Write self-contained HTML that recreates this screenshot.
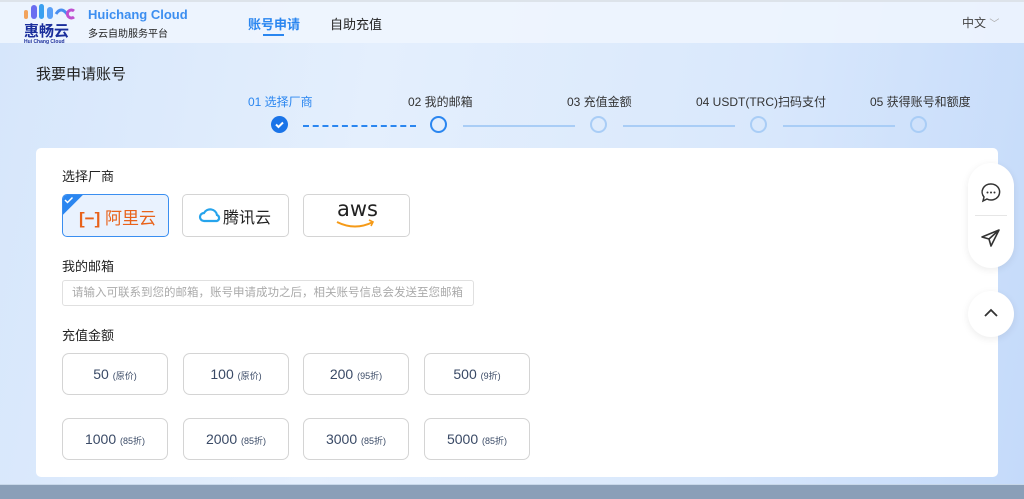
<!DOCTYPE html>
<html><head><meta charset="utf-8"><style>
*{margin:0;padding:0;box-sizing:border-box}
body{width:1024px;height:499px;overflow:hidden;position:relative;font-family:"Liberation Sans","Noto Sans CJK SC",sans-serif;background:linear-gradient(100deg,#d6e6fb 0%,#e4effd 35%,#d9e8fc 70%,#c4dafa 100%);color:#222}
.hdr{position:absolute;left:0;top:0;width:1024px;height:43px;background:rgba(240,246,254,.85);border-top:2px solid #dde3ea}
.abs{position:absolute}
.card{position:absolute;left:36px;top:148px;width:962px;height:329px;background:#fff;border-radius:5px}
.lbl{position:absolute;font-size:13px;color:#222}
.btn{position:absolute;width:106px;height:42px;border:1.5px solid #d4d4d4;border-radius:7px;background:#fff;text-align:center;line-height:40px;font-size:14px;color:#3a4a66}
.btn small{font-size:9px}
.step{position:absolute;top:93px;font-size:12px;color:#333}
.circ{position:absolute;top:116px;width:17px;height:17px;border:2px solid #a9cdf6;border-radius:50%}
.ln{position:absolute;top:125px;height:2px;background:#a9cdf6}
</style></head><body>
<div class="hdr"></div>
<svg class="abs" style="left:22px;top:2px" width="62" height="42">
<rect x="2" y="8" width="4" height="9" rx="2" fill="#f2a35c"/>
<rect x="9" y="3" width="6" height="14" rx="3" fill="#6a6df0"/>
<rect x="17" y="2" width="5" height="15" rx="2.5" fill="#3aa0f0"/>
<rect x="25" y="5" width="6" height="12" rx="3" fill="#5aa0f8"/>
<path d="M34 12 q5 -8 11 0" stroke="#4a8ef0" stroke-width="3" fill="none"/>
<path d="M52 9 a4 4 0 1 0 0 6" stroke="#c050d0" stroke-width="3" fill="none"/>
<text x="2" y="34" font-size="15" font-weight="bold" fill="#1a2e9c" font-family="Noto Sans CJK SC">惠畅云</text>
<text x="2" y="41" font-size="5" font-weight="bold" fill="#1a2e9c">Hui Chang Cloud</text>
</svg>
<div class="abs" style="left:88px;top:7px;font-size:13px;font-weight:bold;color:#3c8ef0">Huichang Cloud</div>
<div class="abs" style="left:88px;top:25px;font-size:10px;color:#222">多云自助服务平台</div>
<div class="abs" style="left:248px;top:14px;font-size:13px;font-weight:bold;color:#2a86f0">账号申请</div>
<div class="abs" style="left:263px;top:34px;width:21px;height:2px;background:#2a86f0"></div>
<div class="abs" style="left:330px;top:14px;font-size:13px;color:#222">自助充值</div>
<div class="abs" style="left:962px;top:14px;font-size:12px;color:#444">中文 <span style="color:#aaa;font-size:10px">﹀</span></div>
<div class="abs" style="left:36px;top:63px;font-size:15px;color:#222">我要申请账号</div>
<div class="step" style="left:248px;color:#2a86f0">01 选择厂商</div>
<div class="step" style="left:408px">02 我的邮箱</div>
<div class="step" style="left:567px">03 充值金额</div>
<div class="step" style="left:696px">04 USDT(TRC)扫码支付</div>
<div class="step" style="left:870px">05 获得账号和额度</div>
<div class="abs" style="left:271px;top:116px;width:17px;height:17px;border-radius:50%;background:#1a74e8"></div>
<svg class="abs" style="left:271px;top:116px" width="17" height="17"><path d="M5 8.5l2.5 2.5 4.5-4.5" stroke="#fff" stroke-width="2" fill="none"/></svg>
<div class="abs" style="left:303px;top:125px;width:113px;border-top:2px dashed #2a86f0"></div>
<div class="circ" style="left:430px;border-color:#2a86f0"></div>
<div class="ln" style="left:463px;width:112px"></div>
<div class="circ" style="left:590px"></div>
<div class="ln" style="left:623px;width:112px"></div>
<div class="circ" style="left:750px"></div>
<div class="ln" style="left:783px;width:112px"></div>
<div class="circ" style="left:910px"></div>
<div class="card"></div>
<div class="lbl" style="left:62px;top:166px">选择厂商</div>
<div class="abs" style="left:62px;top:194px;width:107px;height:43px;border:1.5px solid #3a8ef0;border-radius:5px;background:#e9f2fe;overflow:hidden">
<div style="position:absolute;left:-14px;top:-14px;width:28px;height:28px;background:#2a86f0;transform:rotate(45deg)"></div>
<svg style="position:absolute;left:1px;top:1px" width="10" height="8"><path d="M1 4l2.5 2.5 5-5" stroke="#fff" stroke-width="1.5" fill="none"/></svg>
<div style="position:absolute;left:16px;top:9px;font-size:17px;color:#e8621a;font-weight:bold">[−]<span style="font-weight:normal"> 阿里云</span></div>
</div>
<div class="abs" style="left:182px;top:194px;width:107px;height:43px;border:1.5px solid #d4d4d4;border-radius:5px"></div>
<svg class="abs" style="left:198px;top:206px" width="24" height="18"><path d="M6 15a4 4 0 0 1 0-8a7 7 0 0 1 13 2a3.2 3.2 0 0 1 0 6z" fill="none" stroke="#27a4ec" stroke-width="2.2"/></svg>
<div class="abs" style="left:223px;top:204px;font-size:16px;color:#222">腾讯云</div>
<div class="abs" style="left:303px;top:194px;width:107px;height:43px;border:1.5px solid #d4d4d4;border-radius:5px"></div>
<div class="abs" style="left:337px;top:197px;font-size:21px;color:#222;font-family:'DejaVu Sans',sans-serif">aws</div>
<svg class="abs" style="left:335px;top:219px" width="42" height="11"><path d="M2 3q18 9 36 0" stroke="#f59a17" stroke-width="2" fill="none"/><path d="M34 1l4 2-2 4" stroke="#f59a17" stroke-width="1.6" fill="none"/></svg>
<div class="lbl" style="left:62px;top:256px">我的邮箱</div>
<div class="abs" style="left:62px;top:280px;width:412px;height:26px;border:1px solid #e0e0e0;border-radius:3px;font-size:11.5px;color:#aaa;line-height:24px;padding-left:9px;white-space:nowrap;overflow:hidden">请输入可联系到您的邮箱，账号申请成功之后，相关账号信息会发送至您邮箱</div>
<div class="lbl" style="left:62px;top:325px">充值金额</div>
<div class="btn" style="left:62px;top:353px">50 <small>(原价)</small></div>
<div class="btn" style="left:183px;top:353px">100 <small>(原价)</small></div>
<div class="btn" style="left:303px;top:353px">200 <small>(95折)</small></div>
<div class="btn" style="left:424px;top:353px">500 <small>(9折)</small></div>
<div class="btn" style="left:62px;top:418px">1000 <small>(85折)</small></div>
<div class="btn" style="left:183px;top:418px">2000 <small>(85折)</small></div>
<div class="btn" style="left:303px;top:418px">3000 <small>(85折)</small></div>
<div class="btn" style="left:424px;top:418px">5000 <small>(85折)</small></div>
<div class="abs" style="left:968px;top:163px;width:46px;height:105px;border-radius:23px;background:#fff;box-shadow:0 2px 8px rgba(0,0,0,.08)"></div>
<div class="abs" style="left:975px;top:215px;width:32px;height:1px;background:#e6e6e6"></div>
<svg class="abs" style="left:980px;top:182px" width="22" height="22"><path d="M11 2a8.5 8 0 1 1-4 15l-4 2 1-4A8.5 8 0 0 1 11 2z" fill="none" stroke="#333" stroke-width="1.5"/><circle cx="7.5" cy="10.5" r="1" fill="#333"/><circle cx="11" cy="10.5" r="1" fill="#333"/><circle cx="14.5" cy="10.5" r="1" fill="#333"/></svg>
<svg class="abs" style="left:980px;top:228px" width="22" height="20"><path d="M19 2L2 9l7 2 2 7z M9 11L19 2" fill="none" stroke="#333" stroke-width="1.6" stroke-linejoin="round"/></svg>
<div class="abs" style="left:968px;top:291px;width:46px;height:46px;border-radius:50%;background:#fff;box-shadow:0 2px 8px rgba(0,0,0,.08)"></div>
<svg class="abs" style="left:983px;top:307px" width="16" height="12"><path d="M2 9l6-6 6 6" fill="none" stroke="#333" stroke-width="1.8"/></svg>
<div class="abs" style="left:0;top:484px;width:1024px;height:15px;background:#8a9fb8;border-top:1px solid #c8d8ea"></div>
</body></html>
